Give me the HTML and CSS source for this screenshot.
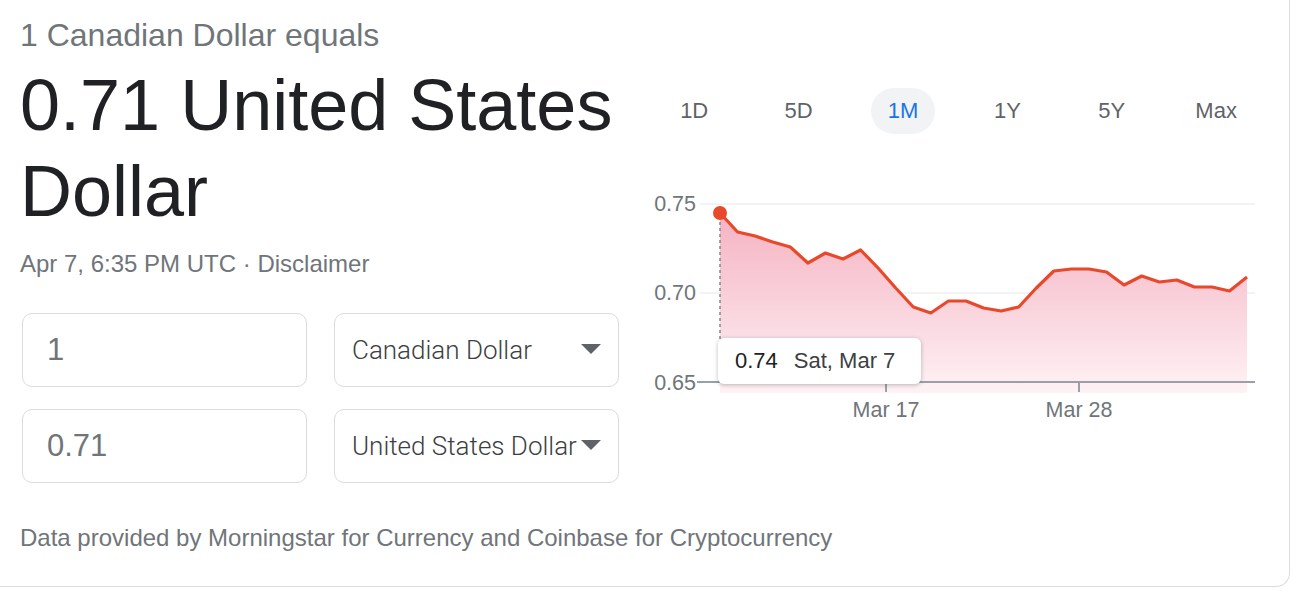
FILE: index.html
```html
<!DOCTYPE html>
<html lang="en">
<head>
<meta charset="utf-8">
<title>Currency converter</title>
<link rel="stylesheet" href="styles.css">
</head>
<body>
<div class="card">
  <div class="main">
    <div class="left">
      <div class="equals">1 Canadian Dollar equals</div>
      <div class="result">0.71 United States Dollar</div>
      <div class="date">Apr 7, 6:35 PM UTC · <span class="disc">Disclaimer</span></div>
      <div class="form">
        <div class="field"><span class="amount">1</span></div>
        <div class="field select"><span class="cur">Canadian Dollar</span><svg class="arrow" width="20" height="10" viewBox="0 0 20 10"><polygon points="0,0 20,0 10,10" fill="#5f6368"/></svg></div>
        <div class="field"><span class="amount">0.71</span></div>
        <div class="field select"><span class="cur">United States Dollar</span><svg class="arrow" width="20" height="10" viewBox="0 0 20 10"><polygon points="0,0 20,0 10,10" fill="#5f6368"/></svg></div>
      </div>
    </div>
    <div class="right">
      <div class="tabs">
        <div class="tab"><span>1D</span></div>
        <div class="tab"><span>5D</span></div>
        <div class="tab"><span class="active">1M</span></div>
        <div class="tab"><span>1Y</span></div>
        <div class="tab"><span>5Y</span></div>
        <div class="tab"><span>Max</span></div>
      </div>
      <div class="chart">
        <svg width="628" height="250" viewBox="0 0 628 250">
          <defs>
            <linearGradient id="fill" x1="0" y1="0" x2="0" y2="1">
              <stop offset="0" stop-color="#f5b2c2"/>
              <stop offset="1" stop-color="#fef2f5"/>
            </linearGradient>
          </defs>
          <line x1="58" y1="24" x2="613" y2="24" stroke="#f1f3f4" stroke-width="2"/>
          <line x1="58" y1="113" x2="613" y2="113" stroke="#f1f3f4" stroke-width="2"/>
          <path d="M78,33 L95.6,52 L113.1,56 L130.7,62 L148.3,67 L165.9,83 L183.4,73 L201,79 L218.6,70 L236.1,88 L253.7,108 L271.3,127 L288.8,133 L306.4,121 L324,121 L341.6,128 L359.1,131 L376.7,127 L394.3,108 L411.8,91 L429.4,89 L447,89 L464.5,92 L482.1,105 L499.7,96 L517.3,102 L534.8,100 L552.4,107 L570,107 L587.5,111 L605,97 L605,213 L78,213 Z" fill="url(#fill)"/>
          <line x1="55" y1="202" x2="613" y2="202" stroke="#9aa0a6" stroke-width="2"/>
          <line x1="244" y1="202" x2="244" y2="212" stroke="#9aa0a6" stroke-width="2"/>
          <line x1="437" y1="202" x2="437" y2="212" stroke="#9aa0a6" stroke-width="2"/>
          <line x1="78" y1="36" x2="78" y2="202" stroke="#80868b" stroke-width="1.5" stroke-dasharray="3 3"/>
          <path d="M78,33 L95.6,52 L113.1,56 L130.7,62 L148.3,67 L165.9,83 L183.4,73 L201,79 L218.6,70 L236.1,88 L253.7,108 L271.3,127 L288.8,133 L306.4,121 L324,121 L341.6,128 L359.1,131 L376.7,127 L394.3,108 L411.8,91 L429.4,89 L447,89 L464.5,92 L482.1,105 L499.7,96 L517.3,102 L534.8,100 L552.4,107 L570,107 L587.5,111 L605,97" fill="none" stroke="#e8492b" stroke-width="3.2" stroke-linejoin="round"/>
          <circle cx="78" cy="33" r="7" fill="#e8492b"/>
          <g class="axis">
            <text x="54" y="31" text-anchor="end">0.75</text>
            <text x="54" y="120" text-anchor="end">0.70</text>
            <text x="54" y="210" text-anchor="end">0.65</text>
            <text x="244" y="237" text-anchor="middle">Mar 17</text>
            <text x="437" y="237" text-anchor="middle">Mar 28</text>
          </g>
        </svg>
        <div class="tooltip"><span class="tval">0.74</span><span class="tdate">Sat, Mar 7</span></div>
      </div>
    </div>
  </div>
  <p class="source">Data provided by Morningstar for Currency and Coinbase for Cryptocurrency</p>
</div>
</body>
</html>
```
FILE: styles.css
```css
* { box-sizing: border-box; }
html, body { margin: 0; padding: 0; background: #ffffff; }
body { font-family: "Liberation Sans", Arial, sans-serif; }

.card {
  width: 1290px;
  height: 587px;
  border-right: 1.5px solid #dadce0;
  border-bottom: 1.5px solid #dadce0;
  border-bottom-right-radius: 14px;
  padding-left: 20px;
}

.main { display: flex; gap: 23px; }

.left { width: 599px; display: flex; flex-direction: column; }

.equals {
  margin-top: 15px;
  font-size: 32px;
  line-height: 40px;
  color: #70757a;
}

.result {
  margin-top: 7px;
  font-size: 72px;
  line-height: 86px;
  color: #202124;
}

.date {
  margin-top: 14px;
  font-size: 24px;
  line-height: 32px;
  color: #70757a;
}

.form {
  margin-top: 33px;
  margin-left: 2px;
  display: grid;
  grid-template-columns: 285px 285px;
  column-gap: 27px;
  row-gap: 22px;
}

.field {
  height: 74px;
  border: 1.5px solid #dadce0;
  border-radius: 10px;
  display: flex;
  align-items: center;
  padding-left: 24px;
}

.amount { font-size: 31px; color: #70757a; }

.select { padding-left: 17px; padding-right: 17px; justify-content: space-between; }
.cur {
  font-family: Roboto, "Liberation Sans", sans-serif;
  font-weight: 300;
  font-size: 26px;
  color: #3c4043;
  white-space: nowrap;
}
.arrow { flex: none; margin-top: -2px; }

.right { width: 628px; display: flex; flex-direction: column; }

.tabs {
  margin-top: 88px;
  display: grid;
  grid-template-columns: repeat(6, 104.4px);
  height: 46px;
}
.tab { display: flex; justify-content: center; align-items: center; }
.tab span {
  font-size: 22px;
  color: #5f6368;
  height: 46px;
  line-height: 46px;
  padding: 0 17px;
  border-radius: 23px;
}
.tab span.active { background: #f1f3f4; color: #1a73e8; }

.chart { position: relative; margin-top: 46px; height: 250px; }
.chart svg { display: block; }
.axis text { font-family: "Liberation Sans", Arial, sans-serif; font-size: 21.5px; fill: #70757a; }

.tooltip {
  position: absolute;
  left: 76px;
  top: 158px;
  width: 203px;
  height: 46px;
  background: #ffffff;
  border-radius: 6px;
  box-shadow: 0 1px 4px rgba(60, 64, 67, 0.35);
  display: flex;
  align-items: center;
  padding-left: 17px;
  font-size: 22px;
}
.tval { color: #202124; margin-right: 16px; }
.tdate { color: #3c4043; }

.source {
  margin: 39px 0 0 0;
  font-size: 24px;
  line-height: 32px;
  color: #70757a;
}
```
